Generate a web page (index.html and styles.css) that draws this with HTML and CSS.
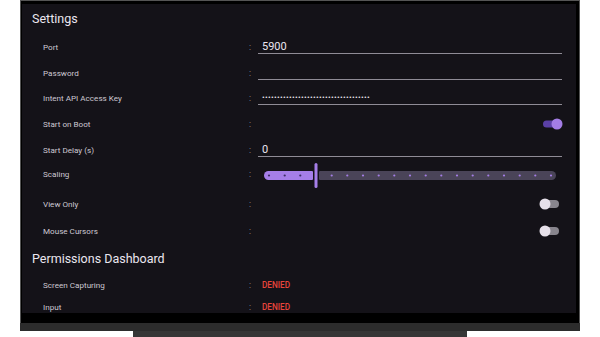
FILE: index.html
```html
<!DOCTYPE html>
<html lang="en">
<head>
    <meta charset="UTF-8">
    <meta name="viewport" content="width=device-width, initial-scale=1.0">
    <title>Settings</title>
    <link rel="stylesheet" href="styles.css">
</head>
<body>
    <div class="tv">
        <div class="bezel">
            <div class="screen">
                <h2 class="section-title">Settings</h2>

                <div class="row">
                    <span class="label">Port</span>
                    <span class="colon">:</span>
                    <div class="field">5900</div>
                </div>
                <div class="row row-compact">
                    <span class="label">Password</span>
                    <span class="colon">:</span>
                    <div class="field"></div>
                </div>
                <div class="row">
                    <span class="label">Intent API Access Key</span>
                    <span class="colon">:</span>
                    <div class="field field-secret">••••••••••••••••••••••••••••••••••••</div>
                </div>
                <div class="row">
                    <span class="label">Start on Boot</span>
                    <span class="colon">:</span>
                    <svg class="toggle" width="24" height="12" viewBox="0 0 24 12">
                        <rect x="4" y="2.5" width="16" height="7" rx="3.5" fill="#5b40a6"/>
                        <circle cx="18" cy="6" r="5.5" fill="#a47de6"/>
                    </svg>
                </div>
                <div class="row">
                    <span class="label">Start Delay (s)</span>
                    <span class="colon">:</span>
                    <div class="field">0</div>
                </div>
                <div class="row row-slider">
                    <span class="label">Scaling</span>
                    <span class="colon">:</span>
                    <svg class="slider" width="292" height="26" viewBox="0 0 292 26">
                        <path d="M4.5 8H48a1 1 0 0 1 1 1V16a1 1 0 0 1-1 1H4.5a4.5 4.5 0 0 1 0-9Z" fill="#a57ee8"/>
                        <rect x="50.5" y="0" width="3" height="25" rx="1.5" fill="#a57ee8"/>
                        <path d="M56 8H287.5a4.5 4.5 0 0 1 0 9H56a1 1 0 0 1-1-1V9a1 1 0 0 1 1-1Z" fill="#4a4458"/>
                        <g fill="#3b2d63">
                            <circle cx="5" cy="12.5" r="1.1"/>
                            <circle cx="20.7" cy="12.5" r="1.1"/>
                            <circle cx="36.3" cy="12.5" r="1.1"/>
                        </g>
                        <g fill="#a57ee8">
                            <circle cx="67.7" cy="12.5" r="1.1"/>
                            <circle cx="83.3" cy="12.5" r="1.1"/>
                            <circle cx="99" cy="12.5" r="1.1"/>
                            <circle cx="114.7" cy="12.5" r="1.1"/>
                            <circle cx="130.3" cy="12.5" r="1.1"/>
                            <circle cx="146" cy="12.5" r="1.1"/>
                            <circle cx="161.7" cy="12.5" r="1.1"/>
                            <circle cx="177.3" cy="12.5" r="1.1"/>
                            <circle cx="193" cy="12.5" r="1.1"/>
                            <circle cx="208.7" cy="12.5" r="1.1"/>
                            <circle cx="224.3" cy="12.5" r="1.1"/>
                            <circle cx="240" cy="12.5" r="1.1"/>
                            <circle cx="255.7" cy="12.5" r="1.1"/>
                            <circle cx="271.3" cy="12.5" r="1.1"/>
                            <circle cx="287" cy="12.5" r="1.1"/>
                        </g>
                    </svg>
                </div>
                <div class="row row-tall">
                    <span class="label">View Only</span>
                    <span class="colon">:</span>
                    <svg class="toggle" width="24" height="12" viewBox="0 0 24 12">
                        <rect x="4" y="2" width="16" height="8" rx="4" fill="#88858d"/>
                        <circle cx="6" cy="6" r="5.5" fill="#e6e0e9"/>
                    </svg>
                </div>
                <div class="row">
                    <span class="label">Mouse Cursors</span>
                    <span class="colon">:</span>
                    <svg class="toggle" width="24" height="12" viewBox="0 0 24 12">
                        <rect x="4" y="2" width="16" height="8" rx="4" fill="#88858d"/>
                        <circle cx="6" cy="6" r="5.5" fill="#e6e0e9"/>
                    </svg>
                </div>

                <h2 class="section-title">Permissions Dashboard</h2>

                <div class="row row-short">
                    <span class="label">Screen Capturing</span>
                    <span class="colon">:</span>
                    <span class="status">DENIED</span>
                </div>
                <div class="row row-short">
                    <span class="label">Input</span>
                    <span class="colon">:</span>
                    <span class="status">DENIED</span>
                </div>
            </div>
        </div>
        <div class="chin"></div>
        <div class="stand"></div>
    </div>
</body>
</html>
```

FILE: styles.css
```css
body {
    margin: 0;
    background-color: #fff;
    font-family: 'Roboto', 'Liberation Sans', sans-serif;
}
.tv {
    width: 560px;
    margin-left: 20px;
}
.bezel {
    background-color: #000;
    border: 1px solid #555;
    border-bottom: none;
    padding: 3px 3px 10px 1px;
}
.screen {
    height: 309px;
    background-color: #141218;
    overflow: hidden;
    display: flex;
    flex-direction: column;
}
.chin {
    height: 8px;
    background-color: #2c2c2c;
}
.stand {
    width: 334px;
    height: 6px;
    margin-left: 113px;
    background-color: #363636;
}
.section-title {
    margin: 0;
    padding: 5px 10px;
    font-size: 12.5px;
    font-weight: 400;
    line-height: 20px;
    color: #ebe6ef;
    flex-shrink: 0;
}
.row {
    display: grid;
    grid-template-columns: 206px 9px 1fr;
    align-items: center;
    height: 26px;
    padding: 0 14px 0 21px;
    flex-shrink: 0;
}
.row-compact {
    height: 25px;
}
.row-slider {
    height: 27px;
    align-items: start;
}
.row-slider .label,
.row-slider .colon {
    margin-top: 5px;
    line-height: 12px;
}
.row-tall {
    height: 28px;
}
.row-short {
    height: 22px;
}
.label {
    font-size: 8.1px;
    color: #cdc8d2;
}
.colon {
    font-size: 8.5px;
    color: #9a96a0;
}
.field {
    height: 13px;
    padding-left: 4px;
    border-bottom: 1px solid #8f8b95;
    font-size: 11px;
    line-height: 13px;
    color: #ebe6ef;
}
.field-secret {
    font-size: 8px;
    letter-spacing: 0.3px;
}
.toggle {
    justify-self: end;
    margin-right: -1px;
}
.slider {
    display: block;
    margin-left: 6px;
}
.status {
    padding-left: 4px;
    font-size: 8.2px;
    font-weight: 500;
    color: #e8453c;
}
```
